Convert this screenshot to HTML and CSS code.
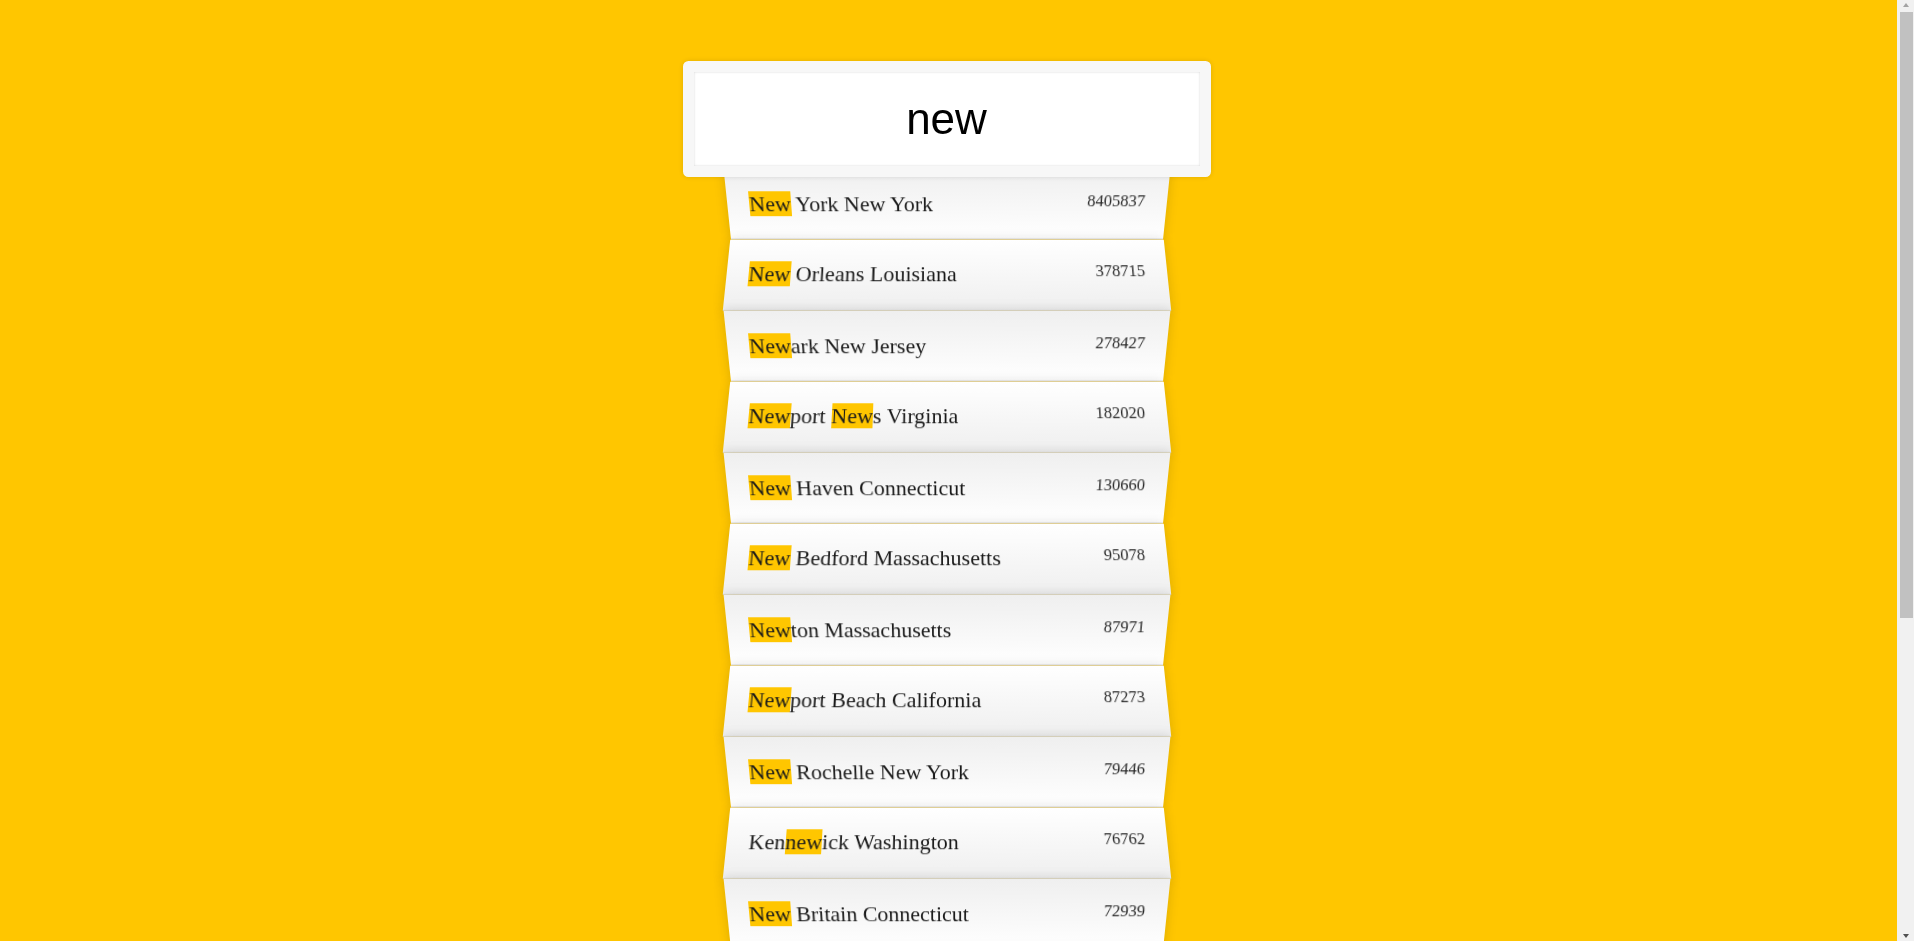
FILE: index.html
```html
<!DOCTYPE html>
<html lang="en">
<head>
<meta charset="UTF-8">
<title>Type Ahead</title>
<link rel="stylesheet" href="styles.css">
</head>
<body>
<form class="search-form">
  <input type="text" class="search" value="new" placeholder="City or State">
  <ul class="suggestions">
    <li><span class="name"><span class="hl">New</span> York New York</span><span class="population">8405837</span></li>
    <li><span class="name"><span class="hl">New</span> Orleans Louisiana</span><span class="population">378715</span></li>
    <li><span class="name"><span class="hl">New</span>ark New Jersey</span><span class="population">278427</span></li>
    <li><span class="name"><span class="hl">New</span>port <span class="hl">New</span>s Virginia</span><span class="population">182020</span></li>
    <li><span class="name"><span class="hl">New</span> Haven Connecticut</span><span class="population">130660</span></li>
    <li><span class="name"><span class="hl">New</span> Bedford Massachusetts</span><span class="population">95078</span></li>
    <li><span class="name"><span class="hl">New</span>ton Massachusetts</span><span class="population">87971</span></li>
    <li><span class="name"><span class="hl">New</span>port Beach California</span><span class="population">87273</span></li>
    <li><span class="name"><span class="hl">New</span> Rochelle New York</span><span class="population">79446</span></li>
    <li><span class="name">Ken<span class="hl">new</span>ick Washington</span><span class="population">76762</span></li>
    <li><span class="name"><span class="hl">New</span> Britain Connecticut</span><span class="population">72939</span></li>
    <li><span class="name"><span class="hl">New</span> Braunfels Texas</span><span class="population">63279</span></li>
    <li><span class="name"><span class="hl">New</span> Brunswick New Jersey</span><span class="population">56910</span></li>
    <li><span class="name">West <span class="hl">New</span> York New Jersey</span><span class="population">53343</span></li>
    <li><span class="name"><span class="hl">New</span>ark Ohio</span><span class="population">48375</span></li>
    <li><span class="name"><span class="hl">New</span>ark California</span><span class="population">43856</span></li>
    <li><span class="name"><span class="hl">New</span> Berlin Wisconsin</span><span class="population">39834</span></li>
  </ul>
</form>
<div class="scrollbar" aria-hidden="true">
  <span class="scroll-up"></span>
  <span class="scroll-thumb"></span>
  <span class="scroll-down"></span>
</div>
</body>
</html>
```
FILE: styles.css
```css
html {
  background: #ffc600;
  font-family: "Liberation Serif", "Times New Roman", serif;
  font-size: 22px;
}

*, *::before, *::after {
  box-sizing: border-box;
}

body {
  margin: 0;
  padding: 0 21px 0 0;
}

.search-form {
  width: 440px;
  margin: 61px auto 55px;
}

.search {
  display: block;
  position: relative;
  z-index: 2;
  width: 528px;
  height: 116px;
  margin: 0 -44px;
  padding: 0 22px;
  border: 11px solid #f7f7f7;
  border-radius: 5.5px;
  background: #fff;
  color: #000;
  font-family: "Liberation Sans", Arial, sans-serif;
  font-size: 44px;
  text-align: center;
  outline: 0;
  box-shadow: 0 0 5.5px rgba(0, 0, 0, 0.12), inset 0 0 2.2px rgba(0, 0, 0, 0.19);
}

.suggestions {
  margin: -11px 0 0;
  padding: 0;
  list-style: none;
}

.suggestions li {
  display: flex;
  justify-content: space-between;
  margin: 0;
  padding: 22px;
  line-height: 26px;
  color: #1a1a1a;
  background: #fff;
  border-bottom: 1px solid #d8d8d8;
  box-shadow: 0 0 11px rgba(0, 0, 0, 0.14);
  text-transform: capitalize;
}

.suggestions li:nth-child(even) {
  transform: perspective(110px) rotateX(3deg) translateY(2.2px) scale(1.001);
  background: linear-gradient(to bottom, #ffffff 0%, #efefef 100%);
}

.suggestions li:nth-child(odd) {
  transform: perspective(110px) rotateX(-3deg) translateY(3.3px);
  background: linear-gradient(to top, #ffffff 0%, #efefef 100%);
}

.population {
  font-size: 16.5px;
  line-height: normal;
  color: #2a2a2a;
}

.hl {
  background: #ffc600;
}

/* window scrollbar, drawn over the page edge */
.scrollbar {
  position: fixed;
  top: 0;
  right: 0;
  width: 17px;
  height: 100vh;
  background: #f1f1f1;
  z-index: 10;
}

.scroll-up,
.scroll-down,
.scroll-thumb {
  position: absolute;
  display: block;
}

.scroll-up {
  top: 3px;
  left: 6px;
  width: 0;
  height: 0;
  border-left: 3.5px solid transparent;
  border-right: 3.5px solid transparent;
  border-bottom: 4px solid #a3a3a3;
}

.scroll-down {
  bottom: 3px;
  left: 6px;
  width: 0;
  height: 0;
  border-left: 3.5px solid transparent;
  border-right: 3.5px solid transparent;
  border-top: 4px solid #505050;
}

.scroll-thumb {
  top: 12px;
  left: 3px;
  width: 13px;
  height: 606px;
  background: #c1c1c1;
}
```
